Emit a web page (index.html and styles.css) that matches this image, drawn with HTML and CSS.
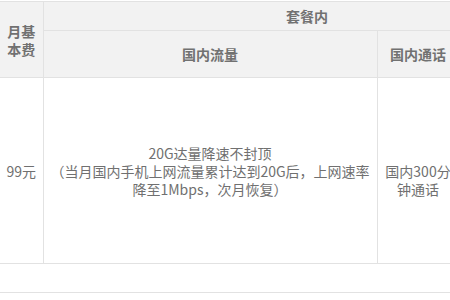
FILE: index.html
```html
<!DOCTYPE html>
<html lang="zh-CN">
<head>
<meta charset="utf-8">
<link rel="stylesheet" href="styles.css">
</head>
<body>
<table class="plan">
  <colgroup>
    <col class="c-fee">
    <col class="c-data">
    <col class="c-call">
    <col class="c-more">
  </colgroup>
  <thead>
    <tr class="r-top">
      <th class="h-fee" rowspan="2">月基<br>本费</th>
      <th class="h-group" colspan="3">套餐内</th>
    </tr>
    <tr class="r-sub">
      <th>国内流量</th>
      <th>国内通话</th>
      <th>国内短信</th>
    </tr>
  </thead>
  <tbody>
    <tr class="r-body">
      <td>99元</td>
      <td>20G达量降速不封顶<br>（当月国内手机上网流量累计达到20G后，上网速率<br>降至1Mbps，次月恢复）</td>
      <td class="d-call"><span class="spacer"></span>国内300分<br>钟通话</td>
      <td></td>
    </tr>
    <tr class="r-empty">
      <td colspan="4"></td>
    </tr>
  </tbody>
</table>
</body>
</html>
```

FILE: styles.css
```css
html, body {
  margin: 0;
  padding: 0;
  overflow: hidden;
  background: #fff;
}

body {
  padding-top: 1px;
  font-family: "Noto Sans CJK SC", "Noto Sans", sans-serif;
  font-size: 14px;
  line-height: 18px;
  color: #707070;
}

.plan {
  border-collapse: collapse;
  table-layout: fixed;
  width: 571px;
}

.c-fee { width: 43px; }
.c-data { width: 334px; }
.c-call { width: 82px; }
.c-more { width: 112px; }

.plan th,
.plan td {
  border: 1px solid #e2e2e2;
  padding: 0 6px;
  text-align: center;
  vertical-align: middle;
  white-space: nowrap;
}

.plan tr > :first-child {
  border-left: none;
  padding: 0;
}

.plan th {
  background: #f2f2f2;
  font-weight: bold;
  color: #717171;
}

.r-top th { height: 28px; }
.r-sub th { height: 46px; }
.r-body td { height: 185px; }
.r-empty td { height: 28px; }

.spacer {
  display: block;
  height: 18px;
}
```
